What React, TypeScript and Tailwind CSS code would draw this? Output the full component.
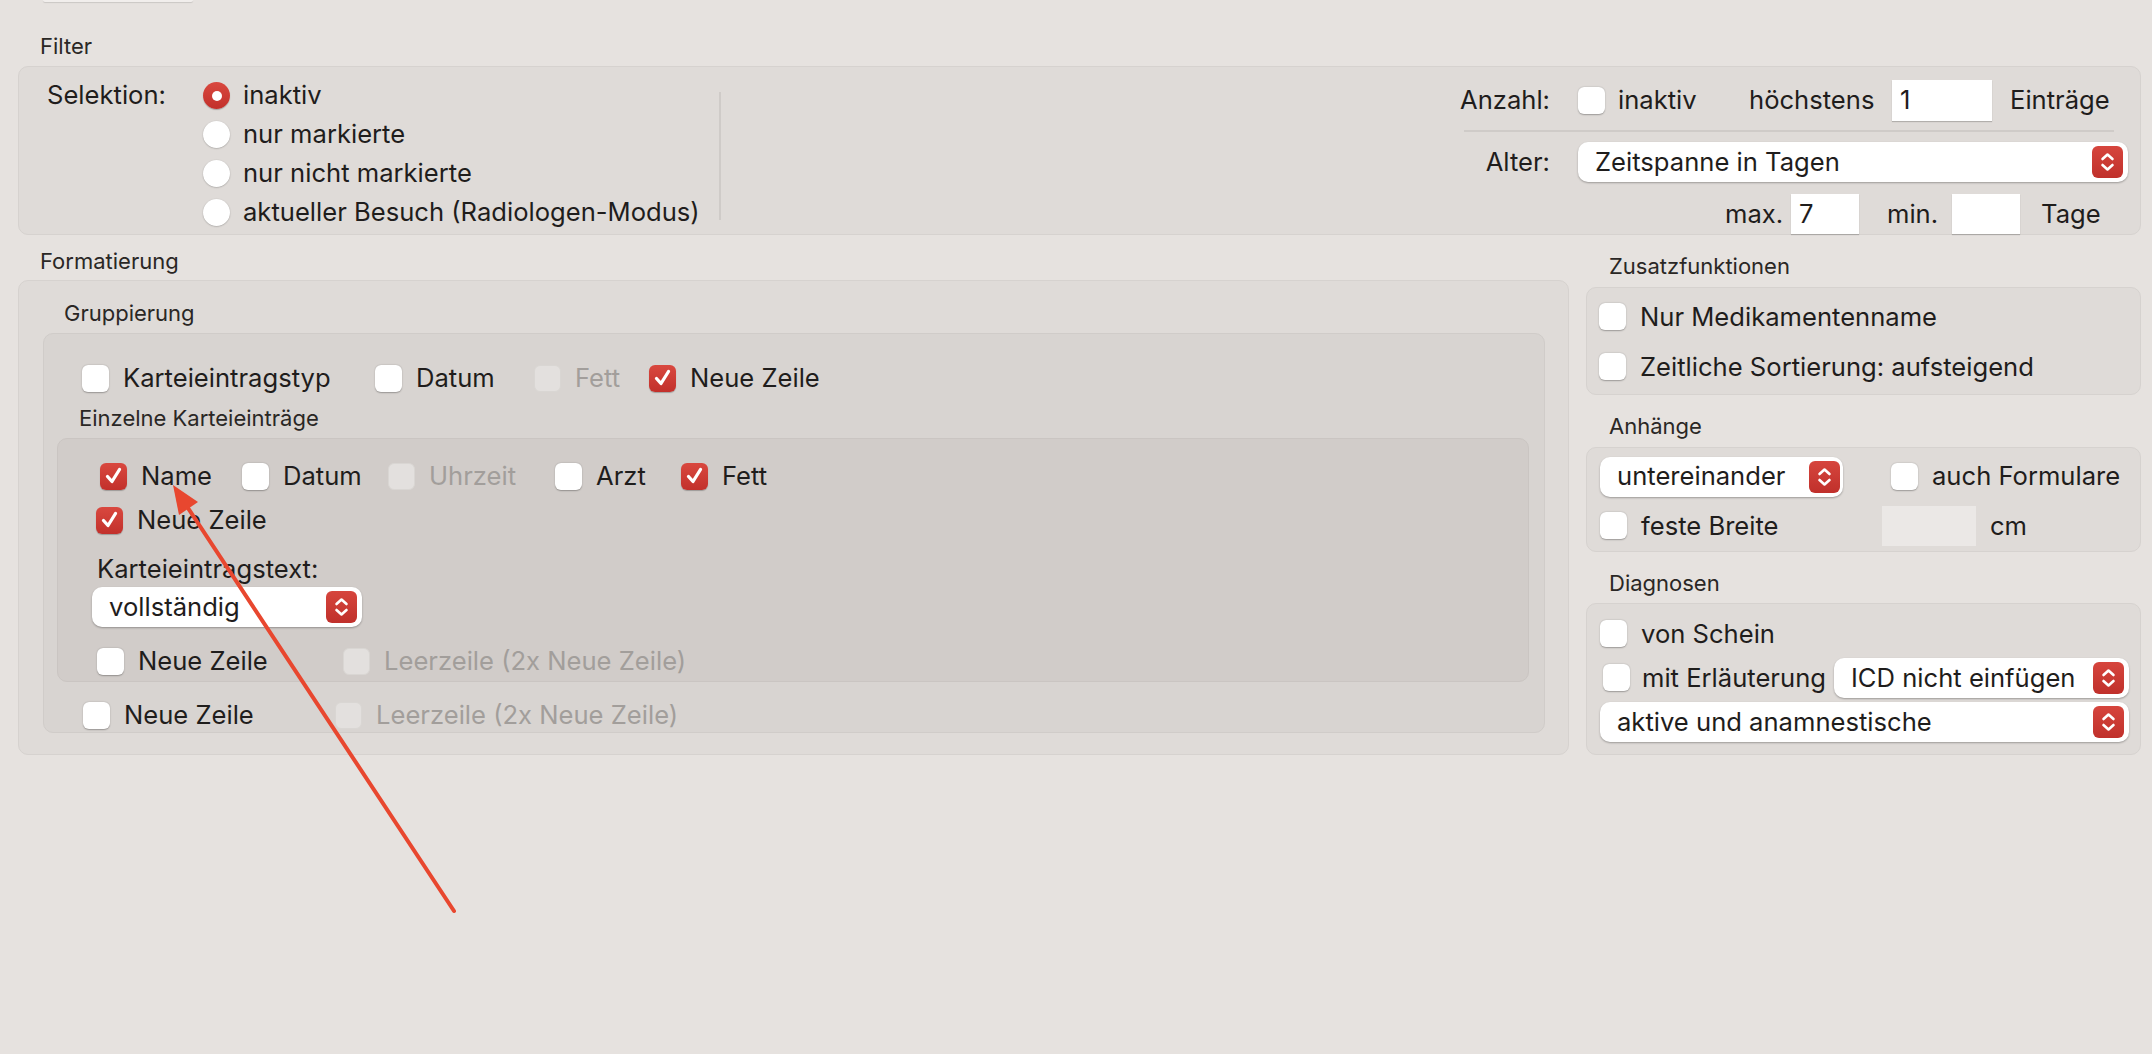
import clsx from "clsx"

const FONT = { fontFamily: "Inter, 'Liberation Sans', sans-serif" }

function CheckBox({ checked, disabled }: { checked?: boolean; disabled?: boolean }) {
  if (checked) {
    return (
      <div className="w-[27px] h-[27px] shrink-0 rounded-[6px] bg-gradient-to-b from-[#d9483f] to-[#c2302b] shadow-[0_1px_1px_rgba(0,0,0,0.25)] flex items-center justify-center">
        <svg width="22" height="22" viewBox="0 0 22 22">
          <path d="M4.5 11.5 L9 16.5 L16.5 4.5" fill="none" stroke="white" strokeWidth="3.3" strokeLinecap="round" strokeLinejoin="round" />
        </svg>
      </div>
    )
  }
  return (
    <div
      className={clsx(
        "w-[27px] h-[27px] shrink-0 rounded-[6px]",
        disabled
          ? "bg-[#e3e0de] border border-[#d9d6d3]"
          : "bg-white shadow-[0_0.5px_1.5px_rgba(0,0,0,0.3)]"
      )}
    />
  )
}

function Check({
  label,
  checked,
  disabled,
  w,
}: {
  label: string
  checked?: boolean
  disabled?: boolean
  w?: string
}) {
  return (
    <div className={clsx("flex items-center gap-[14px] shrink-0", w)}>
      <CheckBox checked={checked} disabled={disabled} />
      <span className={clsx("whitespace-nowrap", disabled ? "text-[#a29e9b]" : "text-[#1f1d1c]")}>{label}</span>
    </div>
  )
}

function Radio({ label, selected }: { label: string; selected?: boolean }) {
  return (
    <div className="flex items-center gap-[13px] h-[39px]">
      {selected ? (
        <div className="w-[27px] h-[27px] rounded-full bg-gradient-to-b from-[#d9483f] to-[#c2302b] shadow-[0_1px_1px_rgba(0,0,0,0.25)] flex items-center justify-center">
          <div className="w-[10px] h-[10px] rounded-full bg-white" />
        </div>
      ) : (
        <div className="w-[27px] h-[27px] rounded-full bg-white shadow-[0_0.5px_1.5px_rgba(0,0,0,0.3)]" />
      )}
      <span className="whitespace-nowrap">{label}</span>
    </div>
  )
}

function Stepper() {
  return (
    <div className="w-[31px] h-[32px] rounded-[6px] bg-gradient-to-b from-[#d6453d] to-[#c0302b] flex items-center justify-center shrink-0">
      <svg width="31" height="32" viewBox="0 0 31 32">
        <path d="M10.5 13 L15.5 8.5 L20.5 13" fill="none" stroke="white" strokeWidth="2.6" strokeLinecap="round" strokeLinejoin="round" />
        <path d="M10.5 19 L15.5 23.5 L20.5 19" fill="none" stroke="white" strokeWidth="2.6" strokeLinecap="round" strokeLinejoin="round" />
      </svg>
    </div>
  )
}

function Select({ value, w, mr = "mr-[5px]" }: { value: string; w: string; mr?: string }) {
  return (
    <div className={clsx("h-[40px] shrink-0 rounded-[10px] bg-white shadow-[0_1px_2px_rgba(0,0,0,0.3)] flex items-center justify-between pl-[17px]", w)}>
      <span className="whitespace-nowrap">{value}</span>
      <div className={mr}>
        <Stepper />
      </div>
    </div>
  )
}

function Field({ value, w, h = "h-[40px]" }: { value?: string; w: string; h?: string }) {
  return (
    <div className={clsx("bg-white shadow-[0_1px_1px_rgba(0,0,0,0.2)] flex items-center pl-[8px] shrink-0", w, h)}>
      {value}
    </div>
  )
}

function Label({ children, className }: { children: string; className?: string }) {
  return <div className={clsx("h-[28px] leading-[28px] text-[22px] text-[#2a2725]", className)}>{children}</div>
}

export default function App() {
  return (
    <div
      className="relative w-[2152px] h-[1054px] overflow-hidden bg-[#e6e2df] text-[25.6px] text-[#1f1d1c]"
      style={FONT}
    >
      <div className="ml-[43px] w-[150px] h-[2px] rounded-b-[4px] bg-[#f1eeec] shadow-[0_1px_1px_rgba(0,0,0,0.12)]" />

      {/* Filter */}
      <Label className="mt-[30px] pl-[40px]">Filter</Label>
      <div className="mt-[6px] ml-[18px] w-[2123px] h-[169px] rounded-[10px] bg-[#dfdbd8] border border-[#d6d2cf] flex items-start">
        <div className="w-[700px] pl-[28px] pt-[9px] flex">
          <div className="w-[156px] h-[39px] flex items-center">Selektion:</div>
          <div className="flex flex-col">
            <Radio label="inaktiv" selected />
            <Radio label="nur markierte" />
            <Radio label="nur nicht markierte" />
            <Radio label="aktueller Besuch (Radiologen-Modus)" />
          </div>
        </div>
        <div className="mt-[25px] w-[2px] h-[128px] bg-[#cfcbc8]" />

        <div className="ml-auto mr-[12px] w-[673px] pt-[13px] flex flex-col">
          <div className="h-[41px] flex items-center">
            <div className="w-[95px] text-right">Anzahl:</div>
            <div className="ml-[28px] w-[171px] flex items-center gap-[13px]">
              <CheckBox />
              <span>inaktiv</span>
            </div>
            <div className="w-[143px]">höchstens</div>
            <Field value="1" w="w-[100px]" h="h-[41px]" />
            <div className="ml-[18px]">Einträge</div>
          </div>
          <div className="ml-[9px] mt-[9px] w-[650px] h-[2px] bg-[#cfcbc8]" />
          <div className="mt-[10px] h-[40px] flex items-center">
            <div className="w-[95px] text-right">Alter:</div>
            <div className="ml-[28px]">
              <Select value="Zeitspanne in Tagen" w="w-[550px]" />
            </div>
          </div>
          <div className="mt-[12px] h-[40px] flex items-center">
            <div className="ml-[270px] w-[66px]">max.</div>
            <Field value="7" w="w-[68px]" />
            <div className="ml-[28px] w-[65px]">min.</div>
            <Field w="w-[68px]" />
            <div className="ml-[21px]">Tage</div>
          </div>
        </div>
      </div>

      {/* Formatierung + right column */}
      <div className="mt-[12px] ml-[18px] flex gap-[17px] items-start">
        <div className="w-[1551px]">
          <Label className="pl-[22px]">Formatierung</Label>
          <div className="mt-[5px] h-[475px] rounded-[10px] bg-[#dfdbd8] border border-[#d6d2cf] flex flex-col">
            <Label className="mt-[18px] ml-[45px]">Gruppierung</Label>
            <div className="mt-[6px] ml-[24px] w-[1502px] h-[400px] rounded-[10px] bg-[#d8d4d1] border border-[#d0ccc9] flex flex-col">
              <div className="mt-[25px] h-[40px] pl-[38px] flex items-center">
                <Check label="Karteieintragstyp" w="w-[293px]" />
                <Check label="Datum" w="w-[159px]" />
                <Check label="Fett" disabled w="w-[115px]" />
                <Check label="Neue Zeile" checked />
              </div>
              <Label className="mt-[7px] pl-[35px]">Einzelne Karteieinträge</Label>
              <div className="mt-[6px] ml-[13px] w-[1472px] h-[248px] rounded-[10px] bg-[#d1ccc9] border border-[#cac5c2] flex flex-col">
                <div className="mt-[17px] h-[40px] pl-[42px] flex items-center">
                  <Check label="Name" checked w="w-[142px]" />
                  <Check label="Datum" w="w-[146px]" />
                  <Check label="Uhrzeit" disabled w="w-[167px]" />
                  <Check label="Arzt" w="w-[126px]" />
                  <Check label="Fett" checked />
                </div>
                <div className="mt-[4px] h-[40px] pl-[38px] flex items-center">
                  <Check label="Neue Zeile" checked />
                </div>
                <div className="mt-[12px] h-[34px] leading-[34px] pl-[39px]">Karteieintragstext:</div>
                <div className="mt-[1px] ml-[34px]">
                  <Select value="vollständig" w="w-[270px]" />
                </div>
                <div className="mt-[14px] h-[40px] pl-[39px] flex items-center">
                  <Check label="Neue Zeile" w="w-[246px]" />
                  <Check label="Leerzeile (2x Neue Zeile)" disabled />
                </div>
              </div>
              <div className="mt-[14px] h-[40px] pl-[39px] flex items-center">
                <Check label="Neue Zeile" w="w-[252px]" />
                <Check label="Leerzeile (2x Neue Zeile)" disabled />
              </div>
            </div>
          </div>
        </div>

        <div className="w-[555px] pt-[5px] flex flex-col">
          <Label className="pl-[23px]">Zusatzfunktionen</Label>
          <div className="mt-[7px] h-[108px] rounded-[10px] bg-[#dfdbd8] border border-[#d6d2cf] pl-[12px] pt-[4px] flex flex-col">
            <div className="h-[50px] flex items-center">
              <Check label="Nur Medikamentenname" />
            </div>
            <div className="h-[50px] flex items-center">
              <Check label="Zeitliche Sortierung: aufsteigend" />
            </div>
          </div>

          <Label className="mt-[17px] pl-[23px]">Anhänge</Label>
          <div className="mt-[7px] h-[105px] rounded-[10px] bg-[#dfdbd8] border border-[#d6d2cf] pl-[13px] pt-[9px] flex flex-col">
            <div className="h-[39px] flex items-center">
              <Select value="untereinander" w="w-[243px]" mr="mr-[3px]" />
              <div className="ml-[48px]">
                <Check label="auch Formulare" />
              </div>
            </div>
            <div className="mt-[10px] h-[40px] flex items-center">
              <Check label="feste Breite" w="w-[282px]" />
              <div className="w-[94px] h-[40px] bg-[#ebe8e6]" />
              <div className="ml-[14px]">cm</div>
            </div>
          </div>

          <Label className="mt-[17px] pl-[23px]">Diagnosen</Label>
          <div className="mt-[6px] h-[152px] rounded-[10px] bg-[#dfdbd8] border border-[#d6d2cf] pl-[13px] flex flex-col">
            <div className="mt-[10px] h-[40px] flex items-center">
              <Check label="von Schein" />
            </div>
            <div className="mt-[4px] h-[40px] flex items-center">
              <div className="w-[234px] pl-[3px] flex items-center gap-[12px]">
                <CheckBox />
                <span className="whitespace-nowrap">mit Erläuterung</span>
              </div>
              <Select value="ICD nicht einfügen" w="w-[295px]" />
            </div>
            <div className="mt-[4px] h-[40px] flex items-center">
              <Select value="aktive und anamnestische" w="w-[529px]" />
            </div>
          </div>
        </div>
      </div>

      {/* annotation arrow */}
      <svg className="absolute inset-0 pointer-events-none" width="2152" height="1054" viewBox="0 0 2152 1054">
        <line x1="454" y1="911" x2="186" y2="505" stroke="#e8472f" strokeWidth="4" strokeLinecap="round" />
        <polygon points="173,485 198,502 179,515" fill="#e8472f" />
      </svg>
    </div>
  )
}
